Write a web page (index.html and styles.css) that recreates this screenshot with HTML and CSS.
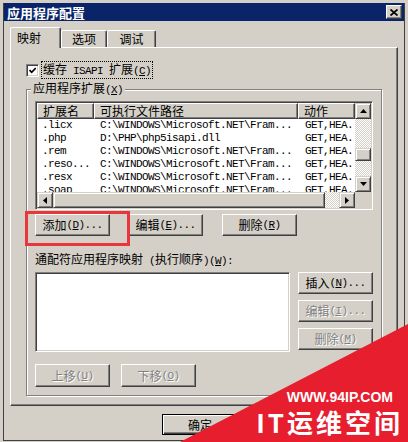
FILE: index.html
```html
<!DOCTYPE html>
<html lang="zh-CN">
<head>
  <meta charset="UTF-8">
  <title>应用程序配置</title>
  <link rel="stylesheet" href="styles.css">
</head>
<body>

  <div class="dialog">
    <div class="titlebar">
      <span class="title">应用程序配置</span>
      <span class="close">
        <svg width="8" height="7" viewBox="0 0 8 7"><path d="M0.5 0.5L7.5 6.5M7.5 0.5L0.5 6.5" stroke="#000" stroke-width="1.7"/></svg>
      </span>
    </div>

    <div class="content">
      <div class="tabs">
        <div class="tab active">映射</div>
        <div class="tab">选项</div>
        <div class="tab">调试</div>
      </div>

      <div class="panel">
        <div class="check-row">
          <span class="checkbox">
            <svg width="7" height="7" viewBox="0 0 7 7"><polyline points="0.5,3 2.7,5.3 6.8,1" fill="none" stroke="#000" stroke-width="1.8"/></svg>
          </span>
          <span class="focus">缓存<span class="m"> ISAPI </span>扩展<span class="m">(<u>C</u>)</span></span>
        </div>

        <fieldset class="group">
          <legend>应用程序扩展<span class="m">(<u>X</u>)</span></legend>

          <div class="listview">
            <div class="lv-body">
              <div class="lv-head">
                <div class="hd c1">扩展名</div>
                <div class="hd c2">可执行文件路径</div>
                <div class="hd c3">动作</div>
              </div>
              <div class="lv-rows m">
                <div class="row"><span class="c1">.licx</span><span class="c2">C:\WINDOWS\Microsoft.NET\Fram...</span><span class="c3">GET,HEA..</span></div>
                <div class="row"><span class="c1">.php</span><span class="c2">D:\PHP\php5isapi.dll</span><span class="c3">GET,HEA..</span></div>
                <div class="row"><span class="c1">.rem</span><span class="c2">C:\WINDOWS\Microsoft.NET\Fram...</span><span class="c3">GET,HEA..</span></div>
                <div class="row"><span class="c1">.reso...</span><span class="c2">C:\WINDOWS\Microsoft.NET\Fram...</span><span class="c3">GET,HEA..</span></div>
                <div class="row"><span class="c1">.resx</span><span class="c2">C:\WINDOWS\Microsoft.NET\Fram...</span><span class="c3">GET,HEA..</span></div>
                <div class="row"><span class="c1">.soap</span><span class="c2">C:\WINDOWS\Microsoft.NET\Fram...</span><span class="c3">GET,HEA..</span></div>
              </div>
            </div>

            <div class="vscroll">
              <div class="sbtn"><svg width="7" height="4" viewBox="0 0 7 4"><polygon points="3.5,0 7,4 0,4"/></svg></div>
              <div class="track vtrack"><div class="thumb vthumb"></div></div>
              <div class="sbtn"><svg width="7" height="4" viewBox="0 0 7 4"><polygon points="0,0 7,0 3.5,4"/></svg></div>
            </div>

            <div class="hscroll">
              <div class="sbtn"><svg width="4" height="7" viewBox="0 0 4 7"><polygon points="4,0 4,7 0,3.5"/></svg></div>
              <div class="thumb hthumb"></div>
              <div class="track"></div>
              <div class="sbtn"><svg width="4" height="7" viewBox="0 0 4 7"><polygon points="0,0 4,3.5 0,7"/></svg></div>
            </div>

            <div class="corner"></div>
          </div>

          <div class="btn-row">
            <div class="mark">
              <button class="btn">添加<span class="m">(<u>D</u>)...</span></button>
            </div>
            <button class="btn edit">编辑<span class="m">(<u>E</u>)...</span></button>
            <button class="btn remove">删除<span class="m">(<u>R</u>)</span></button>
          </div>

          <div class="wild-label">通配符应用程序映射<span class="m"> (</span>执行顺序<span class="m">)(<u>W</u>):</span></div>

          <div class="wild-row">
            <div class="wild-list"></div>
            <div class="side-btns">
              <button class="btn">插入<span class="m">(<u>N</u>)...</span></button>
              <button class="btn disabled">编辑<span class="m">(<u>I</u>)...</span></button>
              <button class="btn disabled">删除<span class="m">(<u>M</u>)</span></button>
            </div>
          </div>

          <div class="move-row">
            <button class="btn disabled">上移<span class="m">(<u>U</u>)</span></button>
            <button class="btn disabled">下移<span class="m">(<u>O</u>)</span></button>
          </div>
        </fieldset>
      </div>

      <div class="footer">
        <button class="btn ok">确定</button>
      </div>
    </div>
  </div>

  <!-- site watermark -->
  <div class="wm-tri"></div>
  <div class="wm-text">
    <div class="wm-url">WWW.94IP.COM</div>
    <div class="wm-name">IT运维空间</div>
  </div>

</body>
</html>
```

FILE: styles.css
```css
* {
  box-sizing: border-box;
}
body {
  margin: 0;
  width: 408px;
  height: 442px;
  overflow: hidden;
  position: relative;
  background: #d4d0c8;
  font-family: "Noto Sans CJK SC", sans-serif;
  font-size: 12px;
  line-height: 12px;
  color: #000;
}
.m {
  font-family: "Liberation Mono", monospace;
  font-size: 11px;
  letter-spacing: -0.6px;
}

/* window frame */
.dialog {
  margin: 3px 0 0 3px;
  width: 402px;
  height: 438px;
  border-left: 1px solid #404040;
  border-right: 1px solid #404040;
  border-bottom: 1px solid #404040;
}
.titlebar {
  height: 18px;
  background: #0a246a;
  display: flex;
  align-items: center;
  justify-content: space-between;
  padding: 0 2px 0 3px;
}
.title {
  color: #fff;
  font-weight: 700;
  font-size: 13px;
  line-height: 13px;
}
.close {
  width: 16px;
  height: 14px;
  background: #d4d0c8;
  border: 1px solid;
  border-color: #fff #404040 #404040 #fff;
  box-shadow: inset -1px -1px 0 #808080;
  display: flex;
  align-items: center;
  justify-content: center;
}
.content {
  padding: 0 6px;
}

/* tabs */
.tabs {
  display: flex;
  align-items: flex-end;
  height: 20px;
  margin-top: 6px;
}
.tab {
  height: 17px;
  width: 46px;
  border: 1px solid;
  border-bottom: none;
  border-color: #fff #404040 #fff #fff;
  border-radius: 2px 2px 0 0;
  box-shadow: inset -1px 0 0 #808080;
  background: #d4d0c8;
  display: flex;
  align-items: center;
  justify-content: center;
}
.tab.active {
  height: 21px;
  width: 51px;
  margin-bottom: -1px;
  position: relative;
  z-index: 1;
  justify-content: flex-start;
  padding-left: 6px;
}
.tab:last-child {
  width: 49px;
}

.panel {
  height: 359px;
  border: 1px solid;
  border-color: #fff #404040 #404040 #fff;
  box-shadow: inset -1px -1px 0 #808080;
  padding: 14px 0 0 15px;
}

/* checkbox */
.check-row {
  display: flex;
  align-items: center;
  height: 16px;
}
.checkbox {
  width: 13px;
  height: 13px;
  background: #fff;
  border: 1px solid;
  border-color: #808080 #fff #fff #808080;
  box-shadow: inset 1px 1px 0 #404040, inset -1px -1px 0 #d4d0c8;
  display: flex;
  align-items: center;
  justify-content: center;
}
.focus {
  margin-left: 2px;
  padding: 1px;
  border: 1px dotted #000;
}

/* group box */
.group {
  margin: 4px 0 0 0;
  width: 356px;
  min-width: 0;
  padding: 5px 8px 8px 8px;
  border: 1px solid #808080;
  box-shadow: 1px 1px 0 #fff, inset 1px 1px 0 #fff;
}
.group legend {
  padding: 0 2px;
  margin-left: -4px;
  background: #d4d0c8;
  line-height: 12px;
}

/* list view */
.listview {
  height: 109px;
  border: 1px solid;
  border-color: #808080 #fff #fff #808080;
  box-shadow: inset 1px 1px 0 #404040, inset -1px -1px 0 #d4d0c8;
  padding: 1px;
  background: #fff;
  display: grid;
  grid-template-columns: 1fr 16px;
  grid-template-rows: 1fr 16px;
}
.lv-body {
  overflow: hidden;
  white-space: nowrap;
}
.lv-head {
  display: flex;
  height: 16px;
}
.hd {
  flex: none;
  border: 1px solid;
  border-color: #fff #404040 #404040 #fff;
  box-shadow: inset -1px -1px 0 #808080;
  background: #d4d0c8;
  padding-left: 4px;
  line-height: 14px;
}
.c1 { width: 57px; flex: none; padding-left: 5px; }
.c2 { width: 204px; flex: none; padding-left: 6px; }
.c3 { width: 57px; flex: none; padding-left: 7px; overflow: hidden; }
.hd.c2, .hd.c3 { padding-left: 5px; }
.row {
  display: flex;
  height: 13px;
  line-height: 13px;
}

/* scrollbars */
.vscroll {
  display: flex;
  flex-direction: column;
}
.hscroll {
  display: flex;
}
.sbtn, .thumb, .corner {
  background: #d4d0c8;
}
.sbtn, .thumb {
  flex: none;
  border: 1px solid;
  border-color: #d4d0c8 #404040 #404040 #d4d0c8;
  box-shadow: inset 1px 1px 0 #fff, inset -1px -1px 0 #808080;
}
.sbtn {
  width: 16px;
  height: 16px;
  display: flex;
  align-items: center;
  justify-content: center;
}
.track {
  flex: 1;
  background-color: #fff;
  background-image: repeating-conic-gradient(#d4d0c8 0 25%, #fff 0 50%);
  background-size: 2px 2px;
}
.vtrack {
  padding-top: 29px;
}
.vthumb {
  height: 13px;
}
.hthumb {
  width: 272px;
}

/* buttons */
.btn {
  width: 75px;
  height: 22px;
  padding: 0;
  font: inherit;
  color: #000;
  background: #d4d0c8;
  border: 1px solid;
  border-color: #fff #404040 #404040 #fff;
  box-shadow: inset -1px -1px 0 #808080;
  display: flex;
  align-items: center;
  justify-content: center;
}
.btn.disabled {
  color: #808080;
  text-shadow: 1px 1px 0 #fff;
}
.btn-row {
  display: flex;
  margin-top: 4px;
}
.btn-row .edit {
  margin-left: 18px;
}
.btn-row .remove {
  margin-left: 19px;
}
.mark {
  position: relative;
}
.mark::after {
  content: '';
  position: absolute;
  left: -10px;
  top: -3px;
  width: 99px;
  height: 29px;
  border: 3px solid #e8363c;
}

.wild-label {
  margin-top: 17px;
}
.wild-row {
  display: flex;
  margin-top: 5px;
  height: 80px;
}
.wild-list {
  width: 255px;
  border: 1px solid;
  border-color: #808080 #fff #fff #808080;
  box-shadow: inset 1px 1px 0 #404040, inset -1px -1px 0 #d4d0c8;
  background: #fff;
}
.side-btns {
  margin-left: 8px;
  display: flex;
  flex-direction: column;
  gap: 6px;
}
.move-row {
  display: flex;
  gap: 11px;
  margin-top: 12px;
}
.move-row .btn {
  height: 23px;
}

.footer {
  padding-top: 8px;
}
.btn.ok {
  margin-left: 152px;
  width: 76px;
  height: 21px;
  border: 1px solid #000;
  box-shadow: inset 1px 1px 0 #fff, inset -1px -1px 0 #404040, inset -2px -2px 0 #808080;
}

/* watermark */
.wm-tri {
  position: absolute;
  right: 0;
  bottom: 0;
  width: 228px;
  height: 118px;
  background: #e61e2e;
  clip-path: polygon(0 100%, 100% 0, 100% 100%);
}
.wm-text {
  position: absolute;
  right: 5px;
  bottom: 7px;
  color: #fff;
  text-align: right;
}
.wm-url {
  font-family: "Liberation Sans", sans-serif;
  font-weight: bold;
  font-size: 14px;
  line-height: 14px;
  margin-right: 10px;
}
.wm-name {
  margin-top: 5px;
  font-weight: 700;
  font-size: 26px;
  line-height: 26px;
  letter-spacing: 3px;
}
```
